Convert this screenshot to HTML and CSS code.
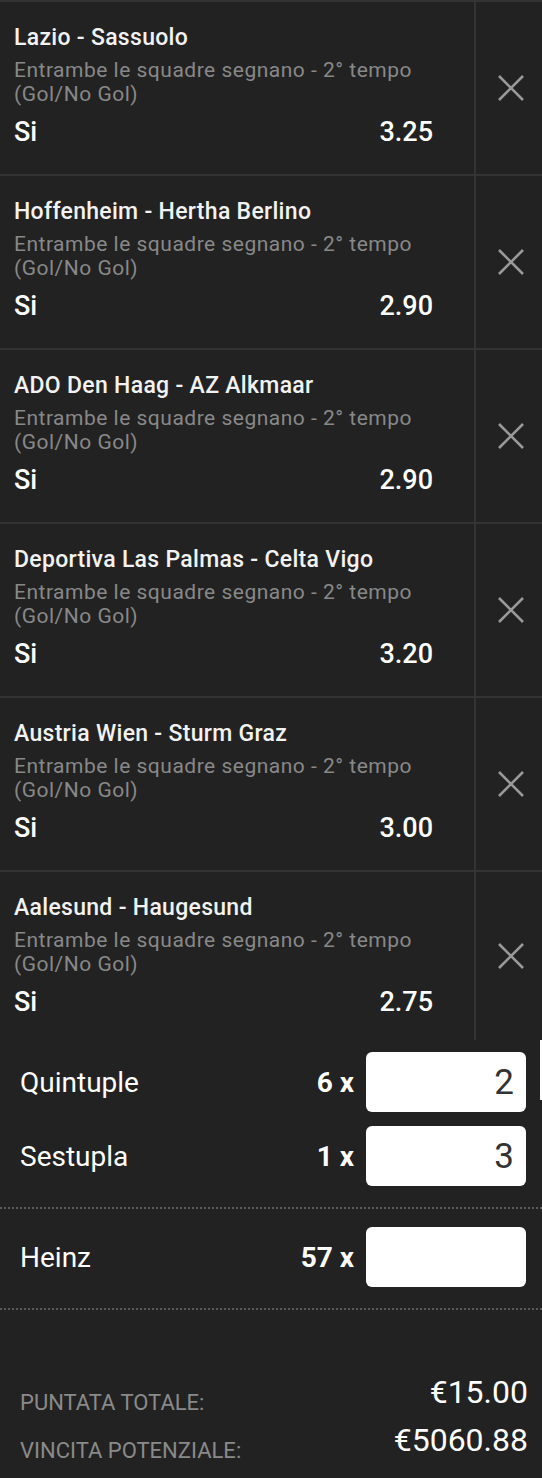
FILE: index.html
```html
<!DOCTYPE html>
<html lang="it">

<head>
    <meta charset="UTF-8">
    <meta name="viewport" content="width=device-width, initial-scale=1.0">
    <title>Schedina</title>
    <link rel="stylesheet" href="styles.css">
</head>

<body>

    <div class="slip">
        <ul class="bets">
            <li class="bet">
                <div class="bet-info">
                    <h2>Lazio - Sassuolo</h2>
                    <p>Entrambe le squadre segnano - 2° tempo<br>(Gol/No Gol)</p>
                    <div class="pick"><span>Si</span><span>3.25</span></div>
                </div>
                <button class="remove" aria-label="Rimuovi">
                    <svg viewBox="0 0 26 26" width="26" height="26"><path d="M1 1L25 25M25 1L1 25" /></svg>
                </button>
            </li>
            <li class="bet">
                <div class="bet-info">
                    <h2>Hoffenheim - Hertha Berlino</h2>
                    <p>Entrambe le squadre segnano - 2° tempo<br>(Gol/No Gol)</p>
                    <div class="pick"><span>Si</span><span>2.90</span></div>
                </div>
                <button class="remove" aria-label="Rimuovi">
                    <svg viewBox="0 0 26 26" width="26" height="26"><path d="M1 1L25 25M25 1L1 25" /></svg>
                </button>
            </li>
            <li class="bet">
                <div class="bet-info">
                    <h2>ADO Den Haag - AZ Alkmaar</h2>
                    <p>Entrambe le squadre segnano - 2° tempo<br>(Gol/No Gol)</p>
                    <div class="pick"><span>Si</span><span>2.90</span></div>
                </div>
                <button class="remove" aria-label="Rimuovi">
                    <svg viewBox="0 0 26 26" width="26" height="26"><path d="M1 1L25 25M25 1L1 25" /></svg>
                </button>
            </li>
            <li class="bet">
                <div class="bet-info">
                    <h2>Deportiva Las Palmas - Celta Vigo</h2>
                    <p>Entrambe le squadre segnano - 2° tempo<br>(Gol/No Gol)</p>
                    <div class="pick"><span>Si</span><span>3.20</span></div>
                </div>
                <button class="remove" aria-label="Rimuovi">
                    <svg viewBox="0 0 26 26" width="26" height="26"><path d="M1 1L25 25M25 1L1 25" /></svg>
                </button>
            </li>
            <li class="bet">
                <div class="bet-info">
                    <h2>Austria Wien - Sturm Graz</h2>
                    <p>Entrambe le squadre segnano - 2° tempo<br>(Gol/No Gol)</p>
                    <div class="pick"><span>Si</span><span>3.00</span></div>
                </div>
                <button class="remove" aria-label="Rimuovi">
                    <svg viewBox="0 0 26 26" width="26" height="26"><path d="M1 1L25 25M25 1L1 25" /></svg>
                </button>
            </li>
            <li class="bet">
                <div class="bet-info">
                    <h2>Aalesund - Haugesund</h2>
                    <p>Entrambe le squadre segnano - 2° tempo<br>(Gol/No Gol)</p>
                    <div class="pick"><span>Si</span><span>2.75</span></div>
                </div>
                <button class="remove" aria-label="Rimuovi">
                    <svg viewBox="0 0 26 26" width="26" height="26"><path d="M1 1L25 25M25 1L1 25" /></svg>
                </button>
            </li>
        </ul>

        <div class="stakes">
            <div class="stake-group">
                <div class="stake">
                    <span class="stake-name">Quintuple</span>
                    <span class="stake-count">6 x</span>
                    <input type="text" value="2">
                </div>
                <div class="stake">
                    <span class="stake-name">Sestupla</span>
                    <span class="stake-count">1 x</span>
                    <input type="text" value="3">
                </div>
            </div>
            <div class="stake-group">
                <div class="stake">
                    <span class="stake-name">Heinz</span>
                    <span class="stake-count">57 x</span>
                    <input type="text" value="">
                </div>
            </div>
        </div>

        <div class="totals">
            <div class="total-row">
                <span class="total-label">Puntata totale:</span>
                <span class="total-value">€15.00</span>
            </div>
            <div class="total-row">
                <span class="total-label">Vincita potenziale:</span>
                <span class="total-value">€5060.88</span>
            </div>
        </div>

        <div class="scroll-thumb"></div>
    </div>

</body>

</html>
```

FILE: styles.css
```css
body {
    font-family: Roboto, 'Liberation Sans', sans-serif;
    margin: 0;
    padding: 0;
    background: #222;
    color: #fff;
}

.slip {
    position: relative;
    width: 542px;
    min-height: 1478px;
}

/* Bet list */
.bets {
    list-style: none;
    margin: 0;
    padding: 0;
}

.bet {
    display: grid;
    grid-template-columns: 476px 1fr;
    height: 172px;
    border-top: 2px solid #333;
}

.bet:last-child {
    height: 168px;
}

.bet-info {
    padding: 21px 41px 0 14px;
    border-right: 2px solid #333;
}

.bet-info h2 {
    margin: 0;
    font-size: 23px;
    line-height: 30px;
    font-weight: 500;
    letter-spacing: 0.3px;
    color: #f2f2f2;
}

.bet-info p {
    margin: 5px 0 0;
    font-size: 21px;
    line-height: 24px;
    letter-spacing: 0.5px;
    color: #888;
}

.pick {
    display: flex;
    justify-content: space-between;
    margin-top: 11px;
    font-size: 27px;
    line-height: 30px;
    font-weight: 500;
}

.remove {
    display: flex;
    align-items: center;
    justify-content: center;
    padding: 0 0 0 3px;
    background: none;
    border: none;
    cursor: pointer;
}

.remove svg {
    stroke: #9a9a9a;
    stroke-width: 2.6;
    fill: none;
}

/* Stakes */
.stakes {
    padding-top: 12px;
}

.stake-group {
    display: flex;
    flex-direction: column;
    gap: 14px;
    padding: 0 16px 21px 20px;
    border-bottom: 2px dotted #5a5a5a;
}

.stake-group + .stake-group {
    padding-top: 18px;
}

.stake {
    display: flex;
    align-items: center;
    height: 60px;
}

.stake-name {
    flex: 1;
    font-size: 28px;
}

.stake-count {
    margin-right: 12px;
    font-size: 28px;
    font-weight: 700;
}

.stake input {
    box-sizing: border-box;
    width: 160px;
    height: 60px;
    padding: 0 12px 0 0;
    border: none;
    border-radius: 6px;
    background: #fff;
    color: #333;
    font-family: inherit;
    font-size: 35px;
    font-weight: 400;
    text-align: right;
}

/* Totals */
.totals {
    display: flex;
    flex-direction: column;
    gap: 10px;
    padding: 63px 14px 0 20px;
}

.total-row {
    display: flex;
    justify-content: space-between;
    align-items: flex-end;
    height: 38px;
}

.total-label {
    font-size: 22px;
    line-height: 16px;
    color: #8a8a8a;
    text-transform: uppercase;
}

.total-value {
    font-size: 32px;
    line-height: 38px;
}

.scroll-thumb {
    position: absolute;
    top: 1040px;
    right: 0;
    width: 2px;
    height: 60px;
    background: #fff;
}
```
